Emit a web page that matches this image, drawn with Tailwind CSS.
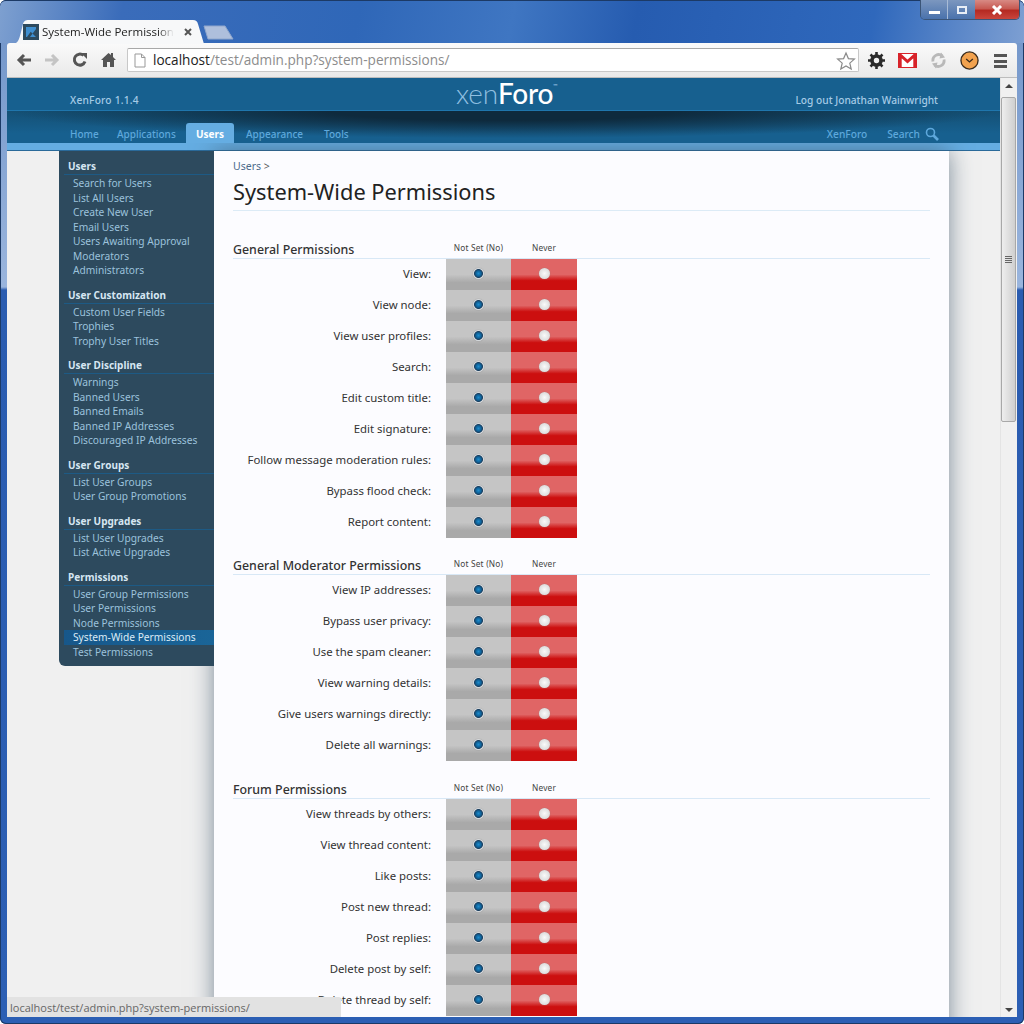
<!DOCTYPE html>
<html><head><meta charset="utf-8"><title>System-Wide Permissions</title>
<script src="https://cdn.jsdelivr.net/npm/@tailwindcss/browser@4"></script></head>
<body class="m-0 bg-white">
<div class="relative w-[1024px] h-[1024px] overflow-hidden flex flex-col rounded-[6px] shadow-[inset_0_0_0_1px_#1c3a66] font-['Noto_Sans',sans-serif] bg-[linear-gradient(180deg,#6f93c8_0,#9ab5dd_287px,#2a5cb0_290px,#2c5fb4_100%)]">
  <!-- title bar -->
  <div class="relative h-[43px] shrink-0 rounded-t-[6px] border-t border-[#1c3a66] bg-[linear-gradient(100deg,#7ea0d0_0,#3a6cba_12%,#2f67b8_35%,#3f76c2_50%,#265cb0_62%,#2f68bc_85%,#7d9fd2_100%)]">
    <div class="absolute left-[12px] top-[19px] w-[192px] h-[24px]">
      <svg class="absolute inset-0" width="192" height="24" viewBox="0 0 192 24"><path d="M0 24C6 24 7 20 9 12L11 4C12 1 13 0 17 0H181C184 0 185 1 186 4L192 24Z" fill="#f7f8f9"/></svg>
      <div class="relative flex items-center h-full pl-[11px] gap-[3px]">
        <svg width="16" height="16" viewBox="0 0 16 16" class="shrink-0"><rect width="16" height="16" fill="#2d4a5e"/><path d="M3 3H13V5L7 13H13 M3 3H11L4 13H3Z" fill="#3f8fd0"/></svg>
        <span class="text-[11.5px] text-[#222] w-[132px] overflow-hidden whitespace-nowrap font-['Open_Sans',sans-serif] [mask-image:linear-gradient(90deg,#000_88%,transparent)]">System-Wide Permissions</span>
        <svg width="8" height="8" viewBox="0 0 8 8" class="ml-[7px]"><path d="M1 1L7 7M7 1L1 7" stroke="#555" stroke-width="2"/></svg>
      </div>
    </div>
    <svg class="absolute left-[203px] top-[24px]" width="31" height="15" viewBox="0 0 31 15"><path d="M1 1H22L30 14H5Z" fill="#aebfdc" stroke="#8fa6cc"/></svg>
    <div class="absolute right-[4px] top-[-1px] w-[100px] h-[20px] flex rounded-b-[5px] border border-t-0 border-[#3b5578] overflow-hidden">
      <div class="w-[27px] bg-[linear-gradient(180deg,#7c97bf,#4a72ac)] border-r border-[#a8bbd6] flex items-center justify-center"><div class="w-[11px] h-[3px] mt-[6px] bg-white"></div></div>
      <div class="w-[27px] bg-[linear-gradient(180deg,#7c97bf,#4a72ac)] flex items-center justify-center"><div class="w-[10px] h-[8px] border-2 border-[#e8eef6]"></div></div>
      <div class="flex-1 bg-[linear-gradient(180deg,#d88a84_0,#c75a52_45%,#b52a22_55%,#c9453c_100%)] flex items-center justify-center"><svg width="12" height="10" viewBox="0 0 12 10"><path d="M2 1L10 9M10 1L2 9" stroke="#fff" stroke-width="3"/></svg></div>
    </div>
  </div>
  <!-- toolbar -->
  <div class="mx-[7px] h-[35px] shrink-0 rounded-t-[3px] bg-[linear-gradient(180deg,#fafafa,#e9e9e9)] border-b border-[#bdbdbd] flex items-center">
    <div class="w-[120px] shrink-0 h-full relative">
      <svg class="absolute left-[9px] top-[9px]" width="16" height="16" viewBox="0 0 16 16"><path d="M15 8H4M8 3L3 8L8 13" fill="none" stroke="#555" stroke-width="3"/></svg>
      <svg class="absolute left-[37px] top-[9px]" width="16" height="16" viewBox="0 0 16 16"><path d="M1 8H12M8 3L13 8L8 13" fill="none" stroke="#c4c4c4" stroke-width="3"/></svg>
      <svg class="absolute left-[65px] top-[9px]" width="16" height="16" viewBox="0 0 16 16"><path d="M13 9.5A5.5 5.5 0 1 1 11.5 3.5" fill="none" stroke="#555" stroke-width="3"/><path d="M9 1H15V7Z" fill="#555"/></svg>
      <svg class="absolute left-[94px] top-[9px]" width="15" height="16" viewBox="0 0 15 16"><path d="M0 8L7.5 1L10 3V1H12V5L15 8H13V15H9V10H6V15H2V8Z" fill="#555"/></svg>
    </div>
    <div class="w-[732px] h-[24px] shrink-0 bg-white border border-[#c8c8c8] border-t-[#a8a8a8] rounded-[2px] flex items-center relative">
      <svg class="ml-[6px]" width="12" height="15" viewBox="0 0 12 15"><path d="M1 1H7.5L11 4.5V14H1ZM7.5 1V4.5H11" fill="#fff" stroke="#999"/></svg>
      <span class="ml-[7px] text-[13.6px] text-[#222] whitespace-nowrap font-['Open_Sans',sans-serif]">localhost<span class="text-[#8c8c8c]">/test/admin.php?system-permissions/</span></span>
      <svg class="absolute right-[2px] top-[2px]" width="20" height="20" viewBox="0 0 20 20"><path d="M10 2L12.4 7.6L18.4 8.1L13.8 12.1L15.2 18L10 14.9L4.8 18L6.2 12.1L1.6 8.1L7.6 7.6Z" fill="#fff" stroke="#8a8a8a" stroke-width="1.2"/></svg>
    </div>
    <div class="flex-1 h-full relative">
      <svg class="absolute left-[9px] top-[9px]" width="17" height="17" viewBox="0 0 17 17"><circle cx="8.5" cy="8.5" r="4.5" fill="none" stroke="#2b2b2b" stroke-width="3.6"/><path d="M8.5 0V17M0 8.5H17M2.5 2.5L14.5 14.5M14.5 2.5L2.5 14.5" stroke="#2b2b2b" stroke-width="2.6" stroke-dasharray="3 11"/></svg>
      <svg class="absolute left-[39px] top-[10px]" width="19" height="15" viewBox="0 0 19 15"><rect x="0.5" y="0.5" width="18" height="14" fill="#fff" stroke="#d8232a"/><path d="M2.2 14V2L9.5 8.5L16.8 2V14" fill="none" stroke="#d8232a" stroke-width="3"/></svg>
      <svg class="absolute left-[71px] top-[9px]" width="17" height="17" viewBox="0 0 17 17"><path d="M3 9.5A5.8 5.8 0 0 1 12.5 4M14 7.5A5.8 5.8 0 0 1 4.5 13" fill="none" stroke="#b9b9b9" stroke-width="2.8"/><path d="M11 0.5L15 5.5L9.5 6.5ZM6 16.5L2 11.5L7.5 10.5Z" fill="#b9b9b9"/></svg>
      <svg class="absolute left-[101px] top-[8px]" width="19" height="19" viewBox="0 0 20 20"><circle cx="10" cy="10" r="9" fill="#f2a24e" stroke="#3a2a1a" stroke-width="1.4"/><path d="M6.5 8.5L10 11.5L13.5 8.5" fill="none" stroke="#3a2a1a" stroke-width="1.4"/></svg>
      <div class="absolute left-[135px] top-[11px] w-[13px] flex flex-col gap-[2.5px]"><div class="h-[3px] bg-[#555]"></div><div class="h-[3px] bg-[#555]"></div><div class="h-[3px] bg-[#555]"></div></div>
    </div>
  </div>
  <!-- viewport -->
  <div class="relative mx-[7px] mb-[7px] flex-1 min-h-0 flex bg-[#f0f0f0] overflow-hidden">
    <div class="w-[993px] shrink-0 flex flex-col">
      <!-- header -->
      <div class="h-[33px] shrink-0 relative bg-[#17608f] border-b border-[#1f76ad] flex justify-between pl-[63px] pr-[62px] pt-[15px] text-[10.2px] text-[#a5cbe6] font-medium">
        <span class="tracking-[0.2px]">XenForo 1.1.4</span><span>Log out Jonathan Wainwright</span>
        <div class="absolute left-[449px] top-[0px] text-[28px] leading-[31px] font-['Lato',sans-serif] text-[#8fbfe0] tracking-[-0.2px]"><span class="font-light">xen</span><span class="text-white">Foro</span><span class="align-top text-[6px] leading-[16px]">™</span></div>
      </div>
      <div class="h-[32px] shrink-0 relative bg-[radial-gradient(ellipse_50%_85%_at_50%_0,#0e2a3d_35%,rgba(14,42,61,0)_100%),linear-gradient(180deg,#145075_0,#17608f_70%)] flex items-end pl-[63px] text-[10px] text-[#5ea8dc] font-medium">
        <span class="w-[47px] h-[20px] leading-[22px]">Home</span>
        <span class="w-[69px] h-[20px] leading-[22px]">Applications</span>
        <span class="w-[48px] text-center h-[20px] leading-[22px] rounded-t-[3px] bg-[#65ade2] text-white font-bold">Users</span>
        <span class="ml-[12px] w-[78px] h-[20px] leading-[22px]">Appearance</span>
        <span class="h-[20px] leading-[22px]">Tools</span>
        <div class="ml-auto flex items-center h-[20px] pt-[3px] pr-[61px] gap-[20px] text-[10.2px]"><span>XenForo</span><span class="flex items-center gap-[5px]">Search <svg width="14" height="14" viewBox="0 0 14 14"><circle cx="5.5" cy="5.5" r="4" fill="none" stroke="#5ea8dc" stroke-width="1.6"/><path d="M8.5 8.5L13 13" stroke="#5ea8dc" stroke-width="2.6"/></svg></span></div>
      </div>
      <div class="h-[8px] shrink-0 bg-[#65ade2] border-b border-[#2a6a9a]"></div>
      <!-- body -->
      <div class="flex-1 min-h-0 flex items-start">
        <nav class="ml-[52px] w-[155px] shrink-0 h-[515px] z-10 bg-[#2d4a5e] rounded-bl-[6px] pl-[5px] pt-[8px] text-[10.2px] leading-[14.5px] text-[#9cc2dc]">
          <h4 class="pl-[4px] border-b border-[#1d5a85] text-[10px] leading-[15px] font-bold text-[#d6e6f2]">Users</h4>
          <ul class="pl-[9px] pt-[1px]"><li>Search for Users</li><li>List All Users</li><li>Create New User</li><li>Email Users</li><li>Users Awaiting Approval</li><li>Moderators</li><li>Administrators</li></ul>
          <h4 class="mt-[10px] pl-[4px] border-b border-[#1d5a85] text-[10px] leading-[15px] font-bold text-[#d6e6f2]">User Customization</h4>
          <ul class="pl-[9px] pt-[1px]"><li>Custom User Fields</li><li>Trophies</li><li>Trophy User Titles</li></ul>
          <h4 class="mt-[10px] pl-[4px] border-b border-[#1d5a85] text-[10px] leading-[15px] font-bold text-[#d6e6f2]">User Discipline</h4>
          <ul class="pl-[9px] pt-[1px]"><li>Warnings</li><li>Banned Users</li><li>Banned Emails</li><li>Banned IP Addresses</li><li>Discouraged IP Addresses</li></ul>
          <h4 class="mt-[10px] pl-[4px] border-b border-[#1d5a85] text-[10px] leading-[15px] font-bold text-[#d6e6f2]">User Groups</h4>
          <ul class="pl-[9px] pt-[1px]"><li>List User Groups</li><li>User Group Promotions</li></ul>
          <h4 class="mt-[10px] pl-[4px] border-b border-[#1d5a85] text-[10px] leading-[15px] font-bold text-[#d6e6f2]">User Upgrades</h4>
          <ul class="pl-[9px] pt-[1px]"><li>List User Upgrades</li><li>List Active Upgrades</li></ul>
          <h4 class="mt-[10px] pl-[4px] border-b border-[#1d5a85] text-[10px] leading-[15px] font-bold text-[#d6e6f2]">Permissions</h4>
          <ul class="pt-[1px]"><li class="pl-[9px]">User Group Permissions</li><li class="pl-[9px]">User Permissions</li><li class="pl-[9px]">Node Permissions</li><li class="pl-[9px] text-[#dcebf6] bg-[linear-gradient(90deg,#17578a,#1a6598)]">System-Wide Permissions</li><li class="pl-[9px]">Test Permissions</li></ul>
        </nav>
        <main class="w-[735px] shrink-0 h-[1200px] bg-[#fcfcff] shadow-[0_0_22px_rgba(60,85,105,0.65)] px-[19px] pt-[8px] text-[#222]">
          <div class="text-[10.5px] leading-[15px] text-[#4a6a8a]">Users <span class="text-[#555]">&gt;</span></div>
          <h1 class="mt-[2px] pb-[3px] border-b border-[#dcebf6] text-[21.8px] leading-[31px] text-[#222]">System-Wide Permissions</h1>

          <div class="mt-[28px] flex items-end h-[20px] border-b border-[#d8e8f6]"><h3 class="w-[213px] text-[12.4px] leading-[17px] font-medium text-[#333]">General Permissions</h3><span class="w-[65px] text-center text-[8.3px] tracking-[0.2px] leading-[20px] text-[#444]">Not Set (No)</span><span class="w-[66px] text-center text-[8.3px] tracking-[0.2px] leading-[20px] text-[#444]">Never</span></div>
          <div class="text-[11.4px] text-[#333]">
            <div class="flex h-[31px]"><span class="w-[198px] mr-[15px] text-right pt-[6px] leading-[18px]">View:</span><div class="w-[65px] flex items-center justify-center bg-[linear-gradient(180deg,#c5c5c5_50%,#a9a9a9_76%)]"><span class="block size-[11px] mb-[3px] rounded-full shadow-[0_0_1px_#777] bg-[radial-gradient(circle,#1f8ccc_0,#0e6299_34%,#1c4060_52%,#d4d8dc_62%,#e4e4e4_100%)]"></span></div><div class="w-[66px] flex items-center justify-center bg-[linear-gradient(180deg,#e06565_50%,#cc0f0f_70%)]"><span class="block size-[11px] mb-[3px] rounded-full shadow-[0_0_1px_#888] bg-[radial-gradient(circle,#fafafa_0,#dcdcdc_70%,#c4c4c4_100%)]"></span></div></div>
            <div class="flex h-[31px]"><span class="w-[198px] mr-[15px] text-right pt-[6px] leading-[18px]">View node:</span><div class="w-[65px] flex items-center justify-center bg-[linear-gradient(180deg,#c5c5c5_50%,#a9a9a9_76%)]"><span class="block size-[11px] mb-[3px] rounded-full shadow-[0_0_1px_#777] bg-[radial-gradient(circle,#1f8ccc_0,#0e6299_34%,#1c4060_52%,#d4d8dc_62%,#e4e4e4_100%)]"></span></div><div class="w-[66px] flex items-center justify-center bg-[linear-gradient(180deg,#e06565_50%,#cc0f0f_70%)]"><span class="block size-[11px] mb-[3px] rounded-full shadow-[0_0_1px_#888] bg-[radial-gradient(circle,#fafafa_0,#dcdcdc_70%,#c4c4c4_100%)]"></span></div></div>
            <div class="flex h-[31px]"><span class="w-[198px] mr-[15px] text-right pt-[6px] leading-[18px]">View user profiles:</span><div class="w-[65px] flex items-center justify-center bg-[linear-gradient(180deg,#c5c5c5_50%,#a9a9a9_76%)]"><span class="block size-[11px] mb-[3px] rounded-full shadow-[0_0_1px_#777] bg-[radial-gradient(circle,#1f8ccc_0,#0e6299_34%,#1c4060_52%,#d4d8dc_62%,#e4e4e4_100%)]"></span></div><div class="w-[66px] flex items-center justify-center bg-[linear-gradient(180deg,#e06565_50%,#cc0f0f_70%)]"><span class="block size-[11px] mb-[3px] rounded-full shadow-[0_0_1px_#888] bg-[radial-gradient(circle,#fafafa_0,#dcdcdc_70%,#c4c4c4_100%)]"></span></div></div>
            <div class="flex h-[31px]"><span class="w-[198px] mr-[15px] text-right pt-[6px] leading-[18px]">Search:</span><div class="w-[65px] flex items-center justify-center bg-[linear-gradient(180deg,#c5c5c5_50%,#a9a9a9_76%)]"><span class="block size-[11px] mb-[3px] rounded-full shadow-[0_0_1px_#777] bg-[radial-gradient(circle,#1f8ccc_0,#0e6299_34%,#1c4060_52%,#d4d8dc_62%,#e4e4e4_100%)]"></span></div><div class="w-[66px] flex items-center justify-center bg-[linear-gradient(180deg,#e06565_50%,#cc0f0f_70%)]"><span class="block size-[11px] mb-[3px] rounded-full shadow-[0_0_1px_#888] bg-[radial-gradient(circle,#fafafa_0,#dcdcdc_70%,#c4c4c4_100%)]"></span></div></div>
            <div class="flex h-[31px]"><span class="w-[198px] mr-[15px] text-right pt-[6px] leading-[18px]">Edit custom title:</span><div class="w-[65px] flex items-center justify-center bg-[linear-gradient(180deg,#c5c5c5_50%,#a9a9a9_76%)]"><span class="block size-[11px] mb-[3px] rounded-full shadow-[0_0_1px_#777] bg-[radial-gradient(circle,#1f8ccc_0,#0e6299_34%,#1c4060_52%,#d4d8dc_62%,#e4e4e4_100%)]"></span></div><div class="w-[66px] flex items-center justify-center bg-[linear-gradient(180deg,#e06565_50%,#cc0f0f_70%)]"><span class="block size-[11px] mb-[3px] rounded-full shadow-[0_0_1px_#888] bg-[radial-gradient(circle,#fafafa_0,#dcdcdc_70%,#c4c4c4_100%)]"></span></div></div>
            <div class="flex h-[31px]"><span class="w-[198px] mr-[15px] text-right pt-[6px] leading-[18px]">Edit signature:</span><div class="w-[65px] flex items-center justify-center bg-[linear-gradient(180deg,#c5c5c5_50%,#a9a9a9_76%)]"><span class="block size-[11px] mb-[3px] rounded-full shadow-[0_0_1px_#777] bg-[radial-gradient(circle,#1f8ccc_0,#0e6299_34%,#1c4060_52%,#d4d8dc_62%,#e4e4e4_100%)]"></span></div><div class="w-[66px] flex items-center justify-center bg-[linear-gradient(180deg,#e06565_50%,#cc0f0f_70%)]"><span class="block size-[11px] mb-[3px] rounded-full shadow-[0_0_1px_#888] bg-[radial-gradient(circle,#fafafa_0,#dcdcdc_70%,#c4c4c4_100%)]"></span></div></div>
            <div class="flex h-[31px]"><span class="w-[198px] mr-[15px] text-right pt-[6px] leading-[18px]">Follow message moderation rules:</span><div class="w-[65px] flex items-center justify-center bg-[linear-gradient(180deg,#c5c5c5_50%,#a9a9a9_76%)]"><span class="block size-[11px] mb-[3px] rounded-full shadow-[0_0_1px_#777] bg-[radial-gradient(circle,#1f8ccc_0,#0e6299_34%,#1c4060_52%,#d4d8dc_62%,#e4e4e4_100%)]"></span></div><div class="w-[66px] flex items-center justify-center bg-[linear-gradient(180deg,#e06565_50%,#cc0f0f_70%)]"><span class="block size-[11px] mb-[3px] rounded-full shadow-[0_0_1px_#888] bg-[radial-gradient(circle,#fafafa_0,#dcdcdc_70%,#c4c4c4_100%)]"></span></div></div>
            <div class="flex h-[31px]"><span class="w-[198px] mr-[15px] text-right pt-[6px] leading-[18px]">Bypass flood check:</span><div class="w-[65px] flex items-center justify-center bg-[linear-gradient(180deg,#c5c5c5_50%,#a9a9a9_76%)]"><span class="block size-[11px] mb-[3px] rounded-full shadow-[0_0_1px_#777] bg-[radial-gradient(circle,#1f8ccc_0,#0e6299_34%,#1c4060_52%,#d4d8dc_62%,#e4e4e4_100%)]"></span></div><div class="w-[66px] flex items-center justify-center bg-[linear-gradient(180deg,#e06565_50%,#cc0f0f_70%)]"><span class="block size-[11px] mb-[3px] rounded-full shadow-[0_0_1px_#888] bg-[radial-gradient(circle,#fafafa_0,#dcdcdc_70%,#c4c4c4_100%)]"></span></div></div>
            <div class="flex h-[31px]"><span class="w-[198px] mr-[15px] text-right pt-[6px] leading-[18px]">Report content:</span><div class="w-[65px] flex items-center justify-center bg-[linear-gradient(180deg,#c5c5c5_50%,#a9a9a9_76%)]"><span class="block size-[11px] mb-[3px] rounded-full shadow-[0_0_1px_#777] bg-[radial-gradient(circle,#1f8ccc_0,#0e6299_34%,#1c4060_52%,#d4d8dc_62%,#e4e4e4_100%)]"></span></div><div class="w-[66px] flex items-center justify-center bg-[linear-gradient(180deg,#e06565_50%,#cc0f0f_70%)]"><span class="block size-[11px] mb-[3px] rounded-full shadow-[0_0_1px_#888] bg-[radial-gradient(circle,#fafafa_0,#dcdcdc_70%,#c4c4c4_100%)]"></span></div></div>
          </div>

          <div class="mt-[17px] flex items-end h-[20px] border-b border-[#d8e8f6]"><h3 class="w-[213px] text-[12.4px] leading-[17px] font-medium text-[#333]">General Moderator Permissions</h3><span class="w-[65px] text-center text-[8.3px] tracking-[0.2px] leading-[20px] text-[#444]">Not Set (No)</span><span class="w-[66px] text-center text-[8.3px] tracking-[0.2px] leading-[20px] text-[#444]">Never</span></div>
          <div class="text-[11.4px] text-[#333]">
            <div class="flex h-[31px]"><span class="w-[198px] mr-[15px] text-right pt-[6px] leading-[18px]">View IP addresses:</span><div class="w-[65px] flex items-center justify-center bg-[linear-gradient(180deg,#c5c5c5_50%,#a9a9a9_76%)]"><span class="block size-[11px] mb-[3px] rounded-full shadow-[0_0_1px_#777] bg-[radial-gradient(circle,#1f8ccc_0,#0e6299_34%,#1c4060_52%,#d4d8dc_62%,#e4e4e4_100%)]"></span></div><div class="w-[66px] flex items-center justify-center bg-[linear-gradient(180deg,#e06565_50%,#cc0f0f_70%)]"><span class="block size-[11px] mb-[3px] rounded-full shadow-[0_0_1px_#888] bg-[radial-gradient(circle,#fafafa_0,#dcdcdc_70%,#c4c4c4_100%)]"></span></div></div>
            <div class="flex h-[31px]"><span class="w-[198px] mr-[15px] text-right pt-[6px] leading-[18px]">Bypass user privacy:</span><div class="w-[65px] flex items-center justify-center bg-[linear-gradient(180deg,#c5c5c5_50%,#a9a9a9_76%)]"><span class="block size-[11px] mb-[3px] rounded-full shadow-[0_0_1px_#777] bg-[radial-gradient(circle,#1f8ccc_0,#0e6299_34%,#1c4060_52%,#d4d8dc_62%,#e4e4e4_100%)]"></span></div><div class="w-[66px] flex items-center justify-center bg-[linear-gradient(180deg,#e06565_50%,#cc0f0f_70%)]"><span class="block size-[11px] mb-[3px] rounded-full shadow-[0_0_1px_#888] bg-[radial-gradient(circle,#fafafa_0,#dcdcdc_70%,#c4c4c4_100%)]"></span></div></div>
            <div class="flex h-[31px]"><span class="w-[198px] mr-[15px] text-right pt-[6px] leading-[18px]">Use the spam cleaner:</span><div class="w-[65px] flex items-center justify-center bg-[linear-gradient(180deg,#c5c5c5_50%,#a9a9a9_76%)]"><span class="block size-[11px] mb-[3px] rounded-full shadow-[0_0_1px_#777] bg-[radial-gradient(circle,#1f8ccc_0,#0e6299_34%,#1c4060_52%,#d4d8dc_62%,#e4e4e4_100%)]"></span></div><div class="w-[66px] flex items-center justify-center bg-[linear-gradient(180deg,#e06565_50%,#cc0f0f_70%)]"><span class="block size-[11px] mb-[3px] rounded-full shadow-[0_0_1px_#888] bg-[radial-gradient(circle,#fafafa_0,#dcdcdc_70%,#c4c4c4_100%)]"></span></div></div>
            <div class="flex h-[31px]"><span class="w-[198px] mr-[15px] text-right pt-[6px] leading-[18px]">View warning details:</span><div class="w-[65px] flex items-center justify-center bg-[linear-gradient(180deg,#c5c5c5_50%,#a9a9a9_76%)]"><span class="block size-[11px] mb-[3px] rounded-full shadow-[0_0_1px_#777] bg-[radial-gradient(circle,#1f8ccc_0,#0e6299_34%,#1c4060_52%,#d4d8dc_62%,#e4e4e4_100%)]"></span></div><div class="w-[66px] flex items-center justify-center bg-[linear-gradient(180deg,#e06565_50%,#cc0f0f_70%)]"><span class="block size-[11px] mb-[3px] rounded-full shadow-[0_0_1px_#888] bg-[radial-gradient(circle,#fafafa_0,#dcdcdc_70%,#c4c4c4_100%)]"></span></div></div>
            <div class="flex h-[31px]"><span class="w-[198px] mr-[15px] text-right pt-[6px] leading-[18px]">Give users warnings directly:</span><div class="w-[65px] flex items-center justify-center bg-[linear-gradient(180deg,#c5c5c5_50%,#a9a9a9_76%)]"><span class="block size-[11px] mb-[3px] rounded-full shadow-[0_0_1px_#777] bg-[radial-gradient(circle,#1f8ccc_0,#0e6299_34%,#1c4060_52%,#d4d8dc_62%,#e4e4e4_100%)]"></span></div><div class="w-[66px] flex items-center justify-center bg-[linear-gradient(180deg,#e06565_50%,#cc0f0f_70%)]"><span class="block size-[11px] mb-[3px] rounded-full shadow-[0_0_1px_#888] bg-[radial-gradient(circle,#fafafa_0,#dcdcdc_70%,#c4c4c4_100%)]"></span></div></div>
            <div class="flex h-[31px]"><span class="w-[198px] mr-[15px] text-right pt-[6px] leading-[18px]">Delete all warnings:</span><div class="w-[65px] flex items-center justify-center bg-[linear-gradient(180deg,#c5c5c5_50%,#a9a9a9_76%)]"><span class="block size-[11px] mb-[3px] rounded-full shadow-[0_0_1px_#777] bg-[radial-gradient(circle,#1f8ccc_0,#0e6299_34%,#1c4060_52%,#d4d8dc_62%,#e4e4e4_100%)]"></span></div><div class="w-[66px] flex items-center justify-center bg-[linear-gradient(180deg,#e06565_50%,#cc0f0f_70%)]"><span class="block size-[11px] mb-[3px] rounded-full shadow-[0_0_1px_#888] bg-[radial-gradient(circle,#fafafa_0,#dcdcdc_70%,#c4c4c4_100%)]"></span></div></div>
          </div>

          <div class="mt-[18px] flex items-end h-[20px] border-b border-[#d8e8f6]"><h3 class="w-[213px] text-[12.4px] leading-[17px] font-medium text-[#333]">Forum Permissions</h3><span class="w-[65px] text-center text-[8.3px] tracking-[0.2px] leading-[20px] text-[#444]">Not Set (No)</span><span class="w-[66px] text-center text-[8.3px] tracking-[0.2px] leading-[20px] text-[#444]">Never</span></div>
          <div class="text-[11.4px] text-[#333]">
            <div class="flex h-[31px]"><span class="w-[198px] mr-[15px] text-right pt-[6px] leading-[18px]">View threads by others:</span><div class="w-[65px] flex items-center justify-center bg-[linear-gradient(180deg,#c5c5c5_50%,#a9a9a9_76%)]"><span class="block size-[11px] mb-[3px] rounded-full shadow-[0_0_1px_#777] bg-[radial-gradient(circle,#1f8ccc_0,#0e6299_34%,#1c4060_52%,#d4d8dc_62%,#e4e4e4_100%)]"></span></div><div class="w-[66px] flex items-center justify-center bg-[linear-gradient(180deg,#e06565_50%,#cc0f0f_70%)]"><span class="block size-[11px] mb-[3px] rounded-full shadow-[0_0_1px_#888] bg-[radial-gradient(circle,#fafafa_0,#dcdcdc_70%,#c4c4c4_100%)]"></span></div></div>
            <div class="flex h-[31px]"><span class="w-[198px] mr-[15px] text-right pt-[6px] leading-[18px]">View thread content:</span><div class="w-[65px] flex items-center justify-center bg-[linear-gradient(180deg,#c5c5c5_50%,#a9a9a9_76%)]"><span class="block size-[11px] mb-[3px] rounded-full shadow-[0_0_1px_#777] bg-[radial-gradient(circle,#1f8ccc_0,#0e6299_34%,#1c4060_52%,#d4d8dc_62%,#e4e4e4_100%)]"></span></div><div class="w-[66px] flex items-center justify-center bg-[linear-gradient(180deg,#e06565_50%,#cc0f0f_70%)]"><span class="block size-[11px] mb-[3px] rounded-full shadow-[0_0_1px_#888] bg-[radial-gradient(circle,#fafafa_0,#dcdcdc_70%,#c4c4c4_100%)]"></span></div></div>
            <div class="flex h-[31px]"><span class="w-[198px] mr-[15px] text-right pt-[6px] leading-[18px]">Like posts:</span><div class="w-[65px] flex items-center justify-center bg-[linear-gradient(180deg,#c5c5c5_50%,#a9a9a9_76%)]"><span class="block size-[11px] mb-[3px] rounded-full shadow-[0_0_1px_#777] bg-[radial-gradient(circle,#1f8ccc_0,#0e6299_34%,#1c4060_52%,#d4d8dc_62%,#e4e4e4_100%)]"></span></div><div class="w-[66px] flex items-center justify-center bg-[linear-gradient(180deg,#e06565_50%,#cc0f0f_70%)]"><span class="block size-[11px] mb-[3px] rounded-full shadow-[0_0_1px_#888] bg-[radial-gradient(circle,#fafafa_0,#dcdcdc_70%,#c4c4c4_100%)]"></span></div></div>
            <div class="flex h-[31px]"><span class="w-[198px] mr-[15px] text-right pt-[6px] leading-[18px]">Post new thread:</span><div class="w-[65px] flex items-center justify-center bg-[linear-gradient(180deg,#c5c5c5_50%,#a9a9a9_76%)]"><span class="block size-[11px] mb-[3px] rounded-full shadow-[0_0_1px_#777] bg-[radial-gradient(circle,#1f8ccc_0,#0e6299_34%,#1c4060_52%,#d4d8dc_62%,#e4e4e4_100%)]"></span></div><div class="w-[66px] flex items-center justify-center bg-[linear-gradient(180deg,#e06565_50%,#cc0f0f_70%)]"><span class="block size-[11px] mb-[3px] rounded-full shadow-[0_0_1px_#888] bg-[radial-gradient(circle,#fafafa_0,#dcdcdc_70%,#c4c4c4_100%)]"></span></div></div>
            <div class="flex h-[31px]"><span class="w-[198px] mr-[15px] text-right pt-[6px] leading-[18px]">Post replies:</span><div class="w-[65px] flex items-center justify-center bg-[linear-gradient(180deg,#c5c5c5_50%,#a9a9a9_76%)]"><span class="block size-[11px] mb-[3px] rounded-full shadow-[0_0_1px_#777] bg-[radial-gradient(circle,#1f8ccc_0,#0e6299_34%,#1c4060_52%,#d4d8dc_62%,#e4e4e4_100%)]"></span></div><div class="w-[66px] flex items-center justify-center bg-[linear-gradient(180deg,#e06565_50%,#cc0f0f_70%)]"><span class="block size-[11px] mb-[3px] rounded-full shadow-[0_0_1px_#888] bg-[radial-gradient(circle,#fafafa_0,#dcdcdc_70%,#c4c4c4_100%)]"></span></div></div>
            <div class="flex h-[31px]"><span class="w-[198px] mr-[15px] text-right pt-[6px] leading-[18px]">Delete post by self:</span><div class="w-[65px] flex items-center justify-center bg-[linear-gradient(180deg,#c5c5c5_50%,#a9a9a9_76%)]"><span class="block size-[11px] mb-[3px] rounded-full shadow-[0_0_1px_#777] bg-[radial-gradient(circle,#1f8ccc_0,#0e6299_34%,#1c4060_52%,#d4d8dc_62%,#e4e4e4_100%)]"></span></div><div class="w-[66px] flex items-center justify-center bg-[linear-gradient(180deg,#e06565_50%,#cc0f0f_70%)]"><span class="block size-[11px] mb-[3px] rounded-full shadow-[0_0_1px_#888] bg-[radial-gradient(circle,#fafafa_0,#dcdcdc_70%,#c4c4c4_100%)]"></span></div></div>
            <div class="flex h-[31px]"><span class="w-[198px] mr-[15px] text-right pt-[6px] leading-[18px]">Delete thread by self:</span><div class="w-[65px] flex items-center justify-center bg-[linear-gradient(180deg,#c5c5c5_50%,#a9a9a9_76%)]"><span class="block size-[11px] mb-[3px] rounded-full shadow-[0_0_1px_#777] bg-[radial-gradient(circle,#1f8ccc_0,#0e6299_34%,#1c4060_52%,#d4d8dc_62%,#e4e4e4_100%)]"></span></div><div class="w-[66px] flex items-center justify-center bg-[linear-gradient(180deg,#e06565_50%,#cc0f0f_70%)]"><span class="block size-[11px] mb-[3px] rounded-full shadow-[0_0_1px_#888] bg-[radial-gradient(circle,#fafafa_0,#dcdcdc_70%,#c4c4c4_100%)]"></span></div></div>
          </div>
        </main>
      </div>
    </div>
    <!-- scrollbar -->
    <div class="w-[17px] shrink-0 bg-[#f0f0f0] border-l border-[#e4e4e4] relative">
      <div class="absolute left-[4px] top-[6px] border-x-[4px] border-x-transparent border-b-[4px] border-b-[#444]"></div>
      <div class="absolute left-[0px] top-[19px] w-[15px] h-[325px] bg-[linear-gradient(90deg,#eeeeee,#cfcfcf)] border border-[#a8a8a8] rounded-[2px] flex flex-col items-center justify-center gap-[1px]"><div class="w-[7px] h-[1px] bg-[#666]"></div><div class="w-[7px] h-[1px] bg-[#666]"></div><div class="w-[7px] h-[1px] bg-[#666]"></div><div class="w-[7px] h-[1px] bg-[#666]"></div></div>
      <div class="absolute left-[4px] bottom-[5px] border-x-[4px] border-x-transparent border-t-[4px] border-t-[#444]"></div>
    </div>
    <div class="absolute left-0 bottom-0 w-[334px] h-[20px] bg-[#e2e2e2] rounded-tr-[2px] pl-[3px] text-[11px] leading-[21px] text-[#666] font-['Open_Sans',sans-serif]">localhost/test/admin.php?system-permissions/</div>
  </div>
</div>
</body></html>
